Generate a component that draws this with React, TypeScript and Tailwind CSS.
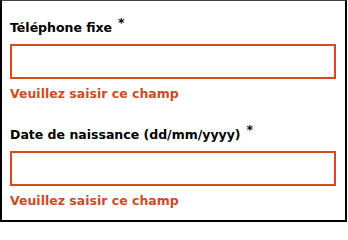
import React from "react";

function Field({ label, className }: { label: string; className?: string }) {
  return (
    <div className={className}>
      <div className="text-[12.5px] leading-[16px] font-bold text-black">
        {label}
        <span className="relative -top-[5px] ml-[6px]">*</span>
      </div>
      <div className="mt-[8px] h-[35px] w-[326px] border-2 border-[#d9481f] bg-white" />
      <div className="mt-[7px] text-[12.5px] leading-[16px] font-bold text-[#d2491f]">
        Veuillez saisir ce champ
      </div>
    </div>
  );
}

export default function App() {
  return (
    <div
      className="w-[347px] h-[222px] bg-white border-l-2 border-r-2 border-b-2 border-t border-t-[#444] border-l-black border-r-black border-b-black pl-[8px] pt-[19px]"
      style={{ fontFamily: '"DejaVu Sans", Verdana, sans-serif' }}
    >
      <Field label="Téléphone fixe" />
      <Field label="Date de naissance (dd/mm/yyyy)" className="mt-[25px]" />
    </div>
  );
}
